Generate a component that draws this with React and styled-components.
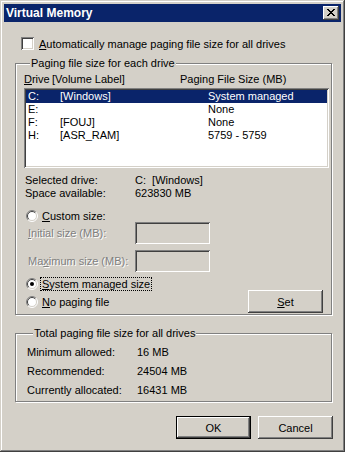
import React from 'react'
import styled, { createGlobalStyle } from 'styled-components'

const face = '#d4d0c8'
const shadow = '#808080'
const dark = '#404040'
const navy = '#0a246a'

const Global = createGlobalStyle`
  html, body { margin: 0; padding: 0; background: ${face}; }
  body {
    font-family: "Liberation Sans", Arial, sans-serif;
    font-size: 11px;
    color: #000;
  }
  u { text-underline-offset: 1px; }
`

const Window = styled.div`
  width: 345px;
  height: 452px;
  box-sizing: border-box;
  padding: 4px;
  background: ${face};
  box-shadow: inset -1px -1px ${dark}, inset 1px 1px ${face},
    inset -2px -2px ${shadow}, inset 2px 2px #fff;
  display: flex;
  flex-direction: column;
`

const TitleBar = styled.div`
  height: 18px;
  background: ${navy};
  display: flex;
  align-items: center;
  justify-content: space-between;
  padding: 0 2px 0 2px;
  color: #fff;
  font-weight: bold;
  font-size: 12px;
`

const CloseBtn = styled.div`
  width: 16px;
  height: 14px;
  box-sizing: border-box;
  background: ${face};
  box-shadow: inset -1px -1px ${dark}, inset 1px 1px #fff,
    inset -2px -2px ${shadow};
  display: flex;
  align-items: center;
  justify-content: center;
  svg { display: block; margin-top: -1px; }
`

const Body = styled.div`
  display: flex;
  flex-direction: column;
  padding: 15px 9px 0 11px;
`

const CheckRow = styled.label`
  display: flex;
  align-items: center;
  gap: 5px;
  margin-left: 6px;
  height: 13px;
`

const Check = styled.span`
  width: 13px;
  height: 13px;
  box-sizing: border-box;
  background: #fff;
  box-shadow: inset 1px 1px ${shadow}, inset -1px -1px #fff,
    inset 2px 2px ${dark}, inset -2px -2px ${face};
`

const Group = styled.fieldset`
  margin: ${p => p.$top}px 0 0 0;
  padding: ${p => p.$pad};
  border: 1px solid ${shadow};
  box-shadow: inset 1px 1px #fff, 1px 1px #fff;
  min-inline-size: 0;
  height: ${p => p.$h}px;
  box-sizing: border-box;
`

const Legend = styled.legend`
  padding: 0 1px;
  margin-left: 6px;
  background: ${face};
  line-height: 13px;
`

const Header = styled.div`
  display: grid;
  grid-template-columns: 28px 128px 1fr;
  height: 13px;
  line-height: 13px;
`

const List = styled.div`
  margin-top: 2px;
  height: 80px;
  box-sizing: border-box;
  background: #fff;
  padding: 2px;
  box-shadow: inset 1px 1px ${shadow}, inset -1px -1px #fff,
    inset 2px 2px ${dark}, inset -2px -2px ${face};
`

const Row = styled.div`
  display: grid;
  grid-template-columns: 32px 148px 1fr;
  height: 13px;
  line-height: 13px;
  padding-left: 2px;
  background: ${p => (p.$sel ? navy : 'transparent')};
  color: ${p => (p.$sel ? '#fff' : '#000')};
`

const Info = styled.div`
  display: grid;
  grid-template-columns: 110px 1fr;
  margin: ${p => p.$top}px 0 0 ${p => p.$left}px;
  line-height: 13px;
  row-gap: ${p => p.$gap}px;
`

const Disabled = styled.span`
  color: ${shadow};
  text-shadow: 1px 1px #fff;
`

const RadioRow = styled.div`
  display: flex;
  align-items: center;
  gap: 4px;
  height: 13px;
  margin: ${p => p.$top}px 0 0 2px;
`

const Focus = styled.span`
  outline: 1px dotted #000;
  outline-offset: 0;
  padding: 0 1px;
  margin-left: -1px;
  line-height: 12px;
`

const SizeRow = styled.div`
  display: grid;
  grid-template-columns: 107px 75px;
  align-items: center;
  margin: ${p => p.$top}px 0 0 4px;
`

const Field = styled.div`
  width: 75px;
  height: 22px;
  box-sizing: border-box;
  background: ${face};
  box-shadow: inset 1px 1px ${shadow}, inset -1px -1px #fff,
    inset 2px 2px ${dark}, inset -2px -2px ${face};
`

const LastRow = styled.div`
  display: flex;
  align-items: flex-end;
  justify-content: space-between;
`

const Radios = styled.div`
  display: flex;
  flex-direction: column;
`

const Button = styled.div`
  width: 75px;
  height: 23px;
  box-sizing: border-box;
  display: flex;
  align-items: center;
  justify-content: center;
  background: ${face};
  margin: ${p => p.$m || 0};
  box-shadow: ${p =>
    p.$def
      ? `inset 0 0 0 1px #000, inset -2px -2px ${dark}, inset 2px 2px #fff, inset -3px -3px ${shadow}`
      : `inset -1px -1px ${dark}, inset 1px 1px #fff, inset -2px -2px ${shadow}`};
`

const Buttons = styled.div`
  display: flex;
  justify-content: flex-end;
  gap: 7px;
  margin: 14px -1px 0 0;
`

function Radio({ checked }) {
  return (
    <svg width="12" height="12" viewBox="0 0 12 12">
      <circle cx="6" cy="6" r="5" fill="#fff" />
      <path d="M2.1 9.9 A5.5 5.5 0 0 1 9.9 2.1" fill="none" stroke={shadow} />
      <path d="M9.9 2.1 A5.5 5.5 0 0 1 2.1 9.9" fill="none" stroke="#fff" />
      <path d="M2.8 9.2 A4.5 4.5 0 0 1 9.2 2.8" fill="none" stroke={dark} />
      <path d="M9.2 2.8 A4.5 4.5 0 0 1 2.8 9.2" fill="none" stroke={face} />
      {checked && <circle cx="6" cy="6" r="2" fill="#000" />}
    </svg>
  )
}

const drives = [
  { d: 'C:', l: '[Windows]', s: 'System managed', sel: true },
  { d: 'E:', l: '', s: 'None' },
  { d: 'F:', l: '[FOUJ]', s: 'None' },
  { d: 'H:', l: '[ASR_RAM]', s: '5759 - 5759' },
]

export default function App() {
  return (
    <>
      <Global />
      <Window>
        <TitleBar>
          <span>Virtual Memory</span>
          <CloseBtn>
            <svg width="8" height="7" viewBox="0 0 8 7" shapeRendering="crispEdges">
              <path
                d="M0 0h2v1h-2zM6 0h2v1h-2zM1 1h2v1h-2zM5 1h2v1h-2zM2 2h4v1h-4zM3 3h2v1h-2zM2 4h4v1h-4zM1 5h2v1h-2zM5 5h2v1h-2zM0 6h2v1h-2zM6 6h2v1h-2z"
                fill="#000"
              />
            </svg>
          </CloseBtn>
        </TitleBar>
        <Body>
          <CheckRow>
            <Check />
            <span>
              <u>A</u>utomatically manage paging file size for all drives
            </span>
          </CheckRow>

          <Group $top={7} $h={258} $pad="3px 2px 0 8px">
            <Legend>Paging file size for each drive</Legend>
            <Header>
              <span>
                <u>D</u>rive
              </span>
              <span>[Volume Label]</span>
              <span>Paging File Size (MB)</span>
            </Header>
            <List>
              {drives.map(r => (
                <Row key={r.d} $sel={r.sel}>
                  <span>{r.d}</span>
                  <span>{r.l}</span>
                  <span>{r.s}</span>
                </Row>
              ))}
            </List>
            <Info $top={6} $left={1} $gap={0}>
              <span>Selected drive:</span>
              <span>C:&nbsp;&nbsp;[Windows]</span>
              <span>Space available:</span>
              <span>623830 MB</span>
            </Info>
            <RadioRow $top={9}>
              <Radio />
              <span>
                <u>C</u>ustom size:
              </span>
            </RadioRow>
            <SizeRow $top={0}>
              <Disabled>
                <u>I</u>nitial size (MB):
              </Disabled>
              <Field />
            </SizeRow>
            <SizeRow $top={6}>
              <Disabled>
                Ma<u>x</u>imum size (MB):
              </Disabled>
              <Field />
            </SizeRow>
            <LastRow>
              <Radios>
                <RadioRow $top={5}>
                  <Radio checked />
                  <Focus>
                    <u>S</u>ystem managed size
                  </Focus>
                </RadioRow>
                <RadioRow $top={5}>
                  <Radio />
                  <span>
                    <u>N</u>o paging file
                  </span>
                </RadioRow>
              </Radios>
              <Button $m="0 6px -5px 0">
                <span>
                  <u>S</u>et
                </span>
              </Button>
            </LastRow>
          </Group>

          <Group $top={12} $h={75} $pad="4px 2px 0 11px">
            <Legend>Total paging file size for all drives</Legend>
            <Info $top={2} $left={0} $gap={6}>
              <span>Minimum allowed:</span>
              <span>16 MB</span>
              <span>Recommended:</span>
              <span>24504 MB</span>
              <span>Currently allocated:</span>
              <span>16431 MB</span>
            </Info>
          </Group>

          <Buttons>
            <Button $def>OK</Button>
            <Button>Cancel</Button>
          </Buttons>
        </Body>
      </Window>
    </>
  )
}
